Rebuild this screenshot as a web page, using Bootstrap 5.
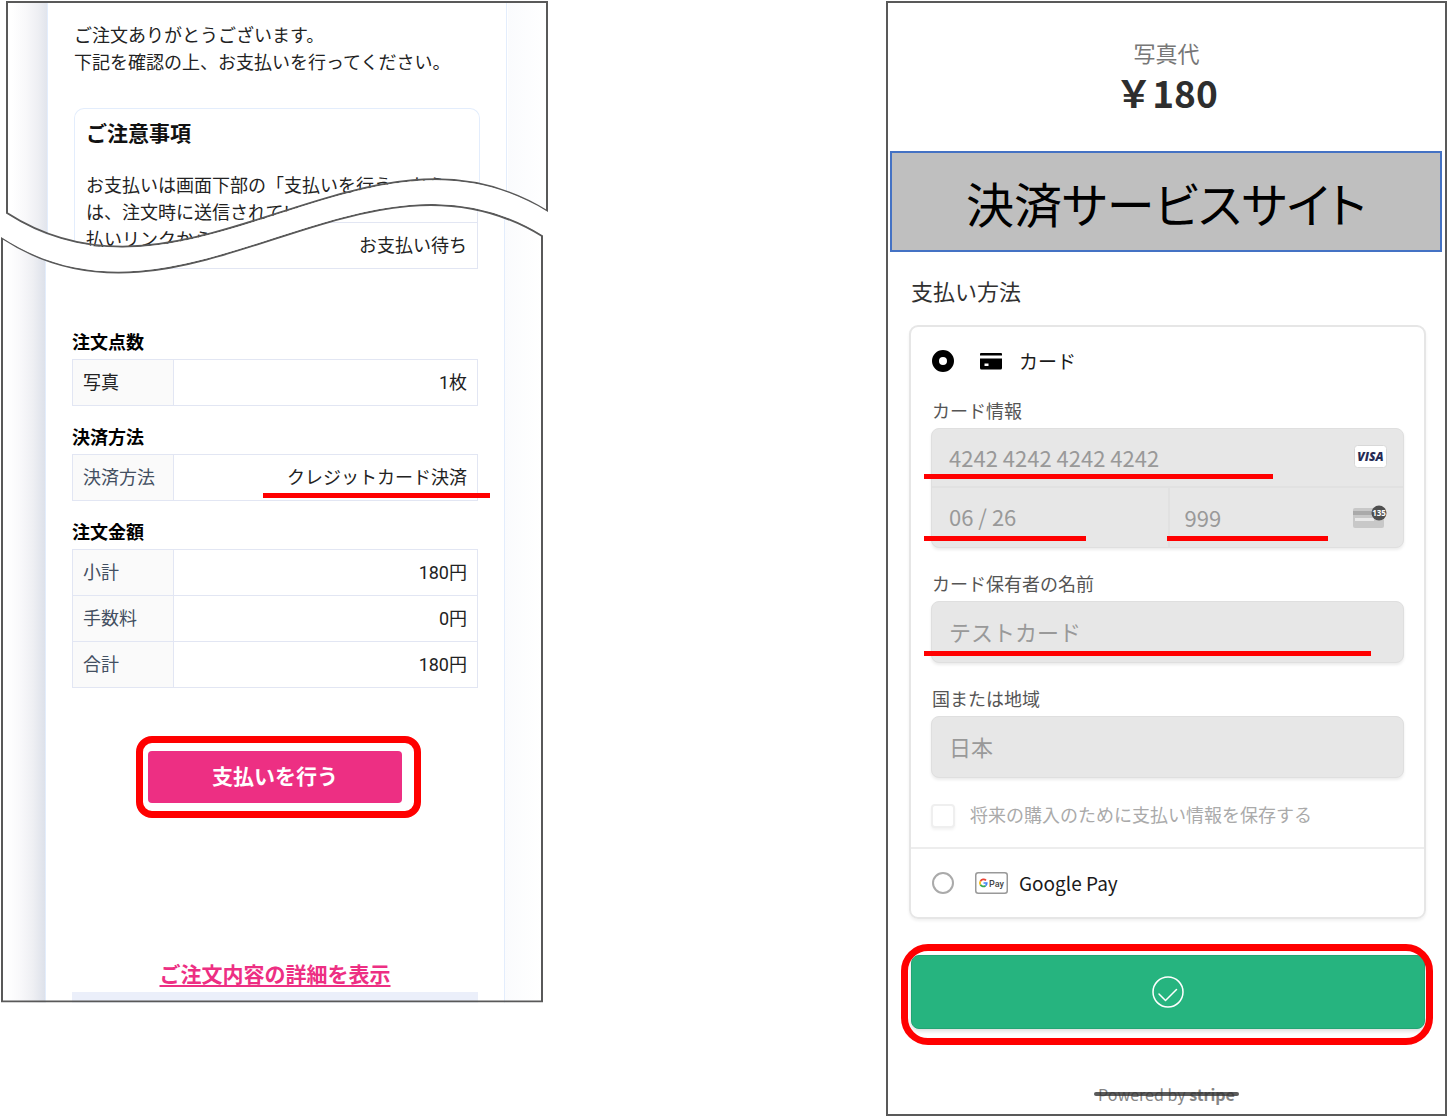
<!DOCTYPE html>
<html lang="ja">
<head>
<meta charset="utf-8">
<meta name="viewport" content="width=device-width, initial-scale=1">
<title>お支払い手順</title>
<link href="https://cdn.jsdelivr.net/npm/bootstrap@5.3.0/dist/css/bootstrap.min.css" rel="stylesheet">
<style>
  :root { --accent: #ed2f83; --marker: #ff0000; --frame: #595959; --cell-line: #e2e6f3; }
  body { font-family: Roboto, "Noto Sans CJK JP", sans-serif; color: #222; font-size: 18px; line-height: 27px; background: #fff; }
  .steps { display: grid; grid-template-columns: 547fr 338fr 561fr; padding: 1px; }
  .step-pay { grid-column: 3; }

  /* torn receipt */
  .torn { position: relative; background:
      linear-gradient(to right, #fff 6px, #f8f8fa 20px, #eeeff3 32px, #dde1ea 44px) left / 44px 100% no-repeat,
      linear-gradient(to right, #fafbfd, #fff) right / 40px 100% no-repeat, #fff; }
  .torn-upper { margin-left: 5px; padding: 0 41px 0 41px; clip-path: url(#clipUpper); }
  .torn-lower { margin: -49px 5px 0 0; padding: 0 38px 0 44px; clip-path: url(#clipLower); }
  .torn-edge { position: absolute; inset: 0; width: 100%; height: 100%; pointer-events: none; }
  .torn-edge path { fill: none; stroke: var(--frame); stroke-width: 2; vector-effect: non-scaling-stroke; }
  .sheet { background: #fff; border: solid #e3edfc; border-width: 0 1px; padding: 0 26px; }
  .sheet-upper { padding-top: 21px; }
  .notice { margin-top: 32px; border: 1px solid #e3edfc; border-bottom: 0; border-radius: 10px 10px 0 0; padding: 12px 11px 0; white-space: nowrap; }
  .notice h2 { font-size: 21px; line-height: 27px; font-weight: 700; color: #111; margin-bottom: 24px; }
  .sheet h3 { font-size: 18px; line-height: 27px; font-weight: 700; color: #000; margin: 18px 0 3px; }
  .sheet h3.first { margin-top: 60px; }
  .detail { width: 100%; border-collapse: collapse; table-layout: fixed; }
  .detail th, .detail td { border: 1px solid var(--cell-line); height: 46px; padding: 0 10px; vertical-align: middle; }
  .detail th { width: 25%; background: #fafafa; font-weight: 400; color: #434f61; white-space: nowrap; }
  .detail th.plain { color: #222; }
  .detail td { text-align: right; }
  .detail .cutoff > * { height: 18px; border-top: 0; }
  .pay-btn { width: 254px; max-width: 100%; height: 52px; margin-top: 63px; }
  .pay-btn .btn { background: var(--accent); color: #fff; font-size: 21px; line-height: 27px; font-weight: 700; border: 0; border-radius: 4px; padding: 2px 0 0; }
  .more { margin-top: 159px; font-size: 21px; line-height: 27px; }
  .more a { color: var(--accent); font-weight: 700; text-underline-offset: 3px; text-decoration-thickness: 2px; }
  .next-band { height: 11px; margin-top: 3px; background: #ebeffa; }

  /* red annotations over the screens */
  .callout { position: absolute; border: 7px solid var(--marker); pointer-events: none; z-index: 3; }
  .callout-a { inset: -15px -19px -15px -12px; border-radius: 16px; }
  .callout-b { inset: -11px -8px -16px -10px; border-radius: 27px; }
  .underlined { position: relative; }
  .underlined::after { content: ""; position: absolute; height: 5px; background: var(--marker); z-index: 2; bottom: 6px; left: -8px; width: 74%; }
  .underlined.u-method::after { left: -24px; right: -23px; width: auto; bottom: -10px; }
  .underlined.u-number::after { bottom: 7px; }
  .underlined.u-exp::after { width: 69%; }
  .underlined.u-cvc::after { left: -3px; width: 69%; }
  .underlined.u-name::after { width: 95%; }

  /* checkout */
  .checkout { font-family: "Noto Sans CJK JP", sans-serif; border: 2px solid var(--frame); padding: 35px 0 8px; height: 100%; }
  .item { font-size: 22px; line-height: 28px; color: #777; }
  .price { font-size: 37px; line-height: 48px; font-weight: 700; color: #2e2e2e; margin-top: 2px; }
  .banner { margin: 35px 3px 0 2px; border: 2px solid #4472c4; background: #bfbfbf; color: #000; font-size: 48px; line-height: 69px; padding: 15px 0 13px; font-weight: 400; font-feature-settings: "palt"; }
  .checkout h2 { font-size: 22px; line-height: 28px; color: #303030; font-weight: 400; margin: 24px 22px 21px 23px; }
  .methods { margin: 0 19px 0 21px; border: 2px solid #e6e6e6; border-radius: 9px; box-shadow: 0 2px 3px rgba(0,0,0,.06); }
  .method-card { padding: 20px 20px 19px; border-bottom: 2px solid #ededed; }
  .method-head { height: 28px; font-size: 19px; line-height: 28px; color: #1a1a1a; }
  .method-gpay { height: 68px; padding: 0 20px; font-size: 19px; color: #1a1a1a; }
  .method-gpay label { padding-bottom: 2px; }
  .pick { appearance: none; flex: none; width: 22px; height: 22px; margin: 0 0 0 1px; border: 2px solid #aaa; border-radius: 50%; background: #fff; }
  .pick:checked { border: 7px solid #000; }
  .pick-icon { width: 33px; margin: 0 11px 0 21px; flex: none; }
  .field { margin-top: 24px; }
  .field-label { display: block; font-size: 18px; line-height: 22px; color: #555; margin: 0 0 7px 1px; }
  .boxed { background: #e7e7e7; border: 1px solid #dfdfdf; border-radius: 8px; box-shadow: 0 2px 3px rgba(0,0,0,.08); }
  .entry { width: 100%; min-width: 0; height: 60px; border: 0; background: transparent; padding: 0 17px 2px; font-size: 22px; color: #999; opacity: 1; appearance: none; display: block; }
  .single { height: 62px; }
  .split-top { height: 59px; border-bottom: 2px solid #e1e1e1; }
  .split-bottom { height: 59px; display: grid; grid-template-columns: 1fr 1fr; }
  .split-bottom > * + * { border-left: 2px solid #e1e1e1; }
  .split-bottom .entry, .split-top .entry { height: 58px; }
  .split-bottom .u-cvc .entry { padding-left: 15px; }
  .brand { flex: none; margin-right: 16px; margin-bottom: 2px; }
  .save { margin-top: 26px; height: 24px; }
  .save input { appearance: none; width: 24px; height: 24px; flex: none; margin: 0; border: 2px solid #efefef; border-radius: 4px; background: #fff; box-shadow: 0 2px 3px rgba(0,0,0,.05); }
  .save label { font-size: 18px; line-height: 24px; color: #aaa; margin-left: 15px; padding-bottom: 4px; white-space: nowrap; }
  .submit { margin: 36px 20px 0 23px; }
  .submit .btn { height: 74px; background: #26b47f; border: 1px solid #22a574; border-radius: 8px; box-shadow: 0 2px 4px rgba(0,0,0,.14); }
  .powered { margin-top: 53px; font-size: 16px; line-height: 24px; color: #858585; }
  .powered span { position: relative; display: inline-block; }
  .powered span::after { content: ""; position: absolute; left: -4px; right: -4px; top: 10px; height: 4px; border-radius: 2px; background: rgba(50,50,50,.8); }
</style>
<script src="https://cdn.jsdelivr.net/npm/bootstrap@5.3.0/dist/js/bootstrap.bundle.min.js"></script>
</head>
<body>
<svg width="0" height="0" class="position-absolute" aria-hidden="true">
  <clipPath id="clipUpper" clipPathUnits="objectBoundingBox"><path transform="scale(.001845 .003968)" d="M0 0H542V211C361 99 181 329 0 213Z"/></clipPath>
  <clipPath id="clipLower" clipPathUnits="objectBoundingBox"><path transform="scale(.001845 .001253)" d="M0 33C181 151 361 -80 542 31V798H0Z"/></clipPath>
</svg>
<main class="steps">
  <section class="step-order">
    <div class="torn torn-upper">
      <div class="sheet sheet-upper">
        <p class="mb-0">ご注文ありがとうございます。<br>下記を確認の上、お支払いを行ってください。</p>
        <div class="notice">
          <h2>ご注意事項</h2>
          <p class="mb-0">お支払いは画面下部の「支払いを行う」から<br>は、注文時に送信されてい<br>払いリンクから</p>
        </div>
      </div>
      <svg class="torn-edge" viewBox="0 0 542 252" preserveAspectRatio="none" aria-hidden="true"><path d="M1 1H541V210C361 98 181 328 1 212Z"/></svg>
    </div>
    <div class="torn torn-lower">
      <div class="sheet">
        <table class="detail">
          <tr class="cutoff"><th></th><td></td></tr>
          <tr><th></th><td>お支払い待ち</td></tr>
        </table>
        <h3 class="first">注文点数</h3>
        <table class="detail"><tr><th class="plain">写真</th><td>1枚</td></tr></table>
        <h3>決済方法</h3>
        <table class="detail"><tr><th>決済方法</th><td><span class="underlined u-method">クレジットカード決済</span></td></tr></table>
        <h3>注文金額</h3>
        <table class="detail">
          <tr><th>小計</th><td>180円</td></tr>
          <tr><th>手数料</th><td>0円</td></tr>
          <tr><th>合計</th><td>180円</td></tr>
        </table>
        <div class="pay-btn position-relative mx-auto">
          <button type="button" class="btn w-100 h-100">支払いを行う</button>
          <div class="callout callout-a"></div>
        </div>
        <div class="more text-center"><a href="#">ご注文内容の詳細を表示</a></div>
        <div class="next-band"></div>
      </div>
      <svg class="torn-edge" viewBox="0 0 542 798" preserveAspectRatio="none" aria-hidden="true"><path d="M1 34C181 152 361 -79 541 32V797H1Z"/></svg>
    </div>
  </section>

  <section class="step-pay">
    <form class="checkout">
      <div class="item text-center">写真代</div>
      <div class="price text-center">￥180</div>
      <div class="banner text-center">決済サービスサイト</div>
      <h2>支払い方法</h2>
      <div class="methods">
        <div class="method-card">
          <div class="method-head d-flex align-items-center">
            <input class="pick" type="radio" name="method" id="m-card" checked>
            <svg class="pick-icon" height="22" viewBox="0 0 33 22" aria-hidden="true"><path d="M5 5.500V4Q5 3 6 3H26Q27 3 27 4V5.500Z"/><path fill-rule="evenodd" d="M5 8.500H27V18Q27 19.500 25.500 19.500H6.500Q5 19.500 5 18ZM9.500 13.500V16H13.500V13.500Z"/></svg>
            <label for="m-card">カード</label>
          </div>
          <div class="field">
            <label class="field-label" for="number">カード情報</label>
            <div class="boxed">
              <div class="split-top underlined u-number d-flex align-items-center">
                <input class="entry" id="number" value="4242 4242 4242 4242" disabled>
                <svg class="brand" width="33" height="23" viewBox="0 0 33 23" role="img" aria-label="VISA"><rect x=".5" y=".5" width="32" height="22" rx="3" fill="#fff" stroke="#d8d8d8"/><text x="16.500" y="16" text-anchor="middle" font-family="Open Sans, sans-serif" font-weight="800" font-style="italic" font-size="12" fill="#252a55">VISA</text></svg>
              </div>
              <div class="split-bottom">
                <div class="underlined u-exp"><input class="entry" aria-label="有効期限" value="06 / 26" disabled></div>
                <div class="underlined u-cvc d-flex align-items-center">
                  <input class="entry" aria-label="セキュリティコード" value="999" disabled>
                  <svg class="brand" width="34" height="24" viewBox="0 0 34 24" aria-hidden="true"><rect y="3" width="31" height="20" rx="2" fill="#c8c8c8"/><rect y="6" width="31" height="4" fill="#aaa"/><rect x="2" y="13" width="19" height="3" fill="#e9e9e9"/><circle cx="26" cy="8" r="7.500" fill="#4f4f4f"/><text x="26" y="11" text-anchor="middle" font-family="Open Sans, sans-serif" font-weight="700" font-size="8" fill="#fff">135</text></svg>
                </div>
              </div>
            </div>
          </div>
          <div class="field">
            <label class="field-label" for="holder">カード保有者の名前</label>
            <div class="boxed single underlined u-name"><input class="entry" id="holder" value="テストカード" disabled></div>
          </div>
          <div class="field">
            <label class="field-label" for="country">国または地域</label>
            <div class="boxed single"><select class="entry" id="country" disabled><option>日本</option></select></div>
          </div>
          <div class="save d-flex align-items-center">
            <input type="checkbox" id="save" disabled>
            <label for="save">将来の購入のために支払い情報を保存する</label>
          </div>
        </div>
        <div class="method-gpay d-flex align-items-center">
          <input class="pick" type="radio" name="method" id="m-gpay">
          <svg class="pick-icon" height="22" viewBox="0 0 33 22" aria-hidden="true"><rect x=".75" y=".75" width="31.500" height="20.500" rx="2.500" fill="#fff" stroke="#999" stroke-width="1.500"/><g fill="none" stroke-width="1.700"><path stroke="#ea4335" d="M11 8.300A3.500 3.500 0 0 0 5.400 9.300"/><path stroke="#fbbc04" d="M5.400 9.200A3.500 3.500 0 0 0 5.400 12.800"/><path stroke="#34a853" d="M5.400 12.700A3.500 3.500 0 0 0 10.500 13.700"/><path stroke="#4285f4" d="M10.400 13.800A3.500 3.500 0 0 0 11.800 11H8.500"/></g><text x="14" y="14.500" font-family="Roboto, sans-serif" font-weight="500" font-size="9" fill="#444">Pay</text></svg>
          <label for="m-gpay">Google Pay</label>
        </div>
      </div>
      <div class="submit position-relative">
        <button type="button" class="btn w-100 p-0 d-flex align-items-center justify-content-center" aria-label="支払い完了">
          <svg width="32" height="32" viewBox="0 0 32 32" fill="none" stroke="#fff" stroke-width="1.500" stroke-linecap="round" stroke-linejoin="round"><circle cx="16" cy="16" r="15"/><path d="M7 18L13.500 24.500L24.500 13.500"/></svg>
        </button>
        <div class="callout callout-b"></div>
      </div>
      <div class="powered text-center"><span>Powered by <b>stripe</b></span></div>
    </form>
  </section>
</main>
</body>
</html>
